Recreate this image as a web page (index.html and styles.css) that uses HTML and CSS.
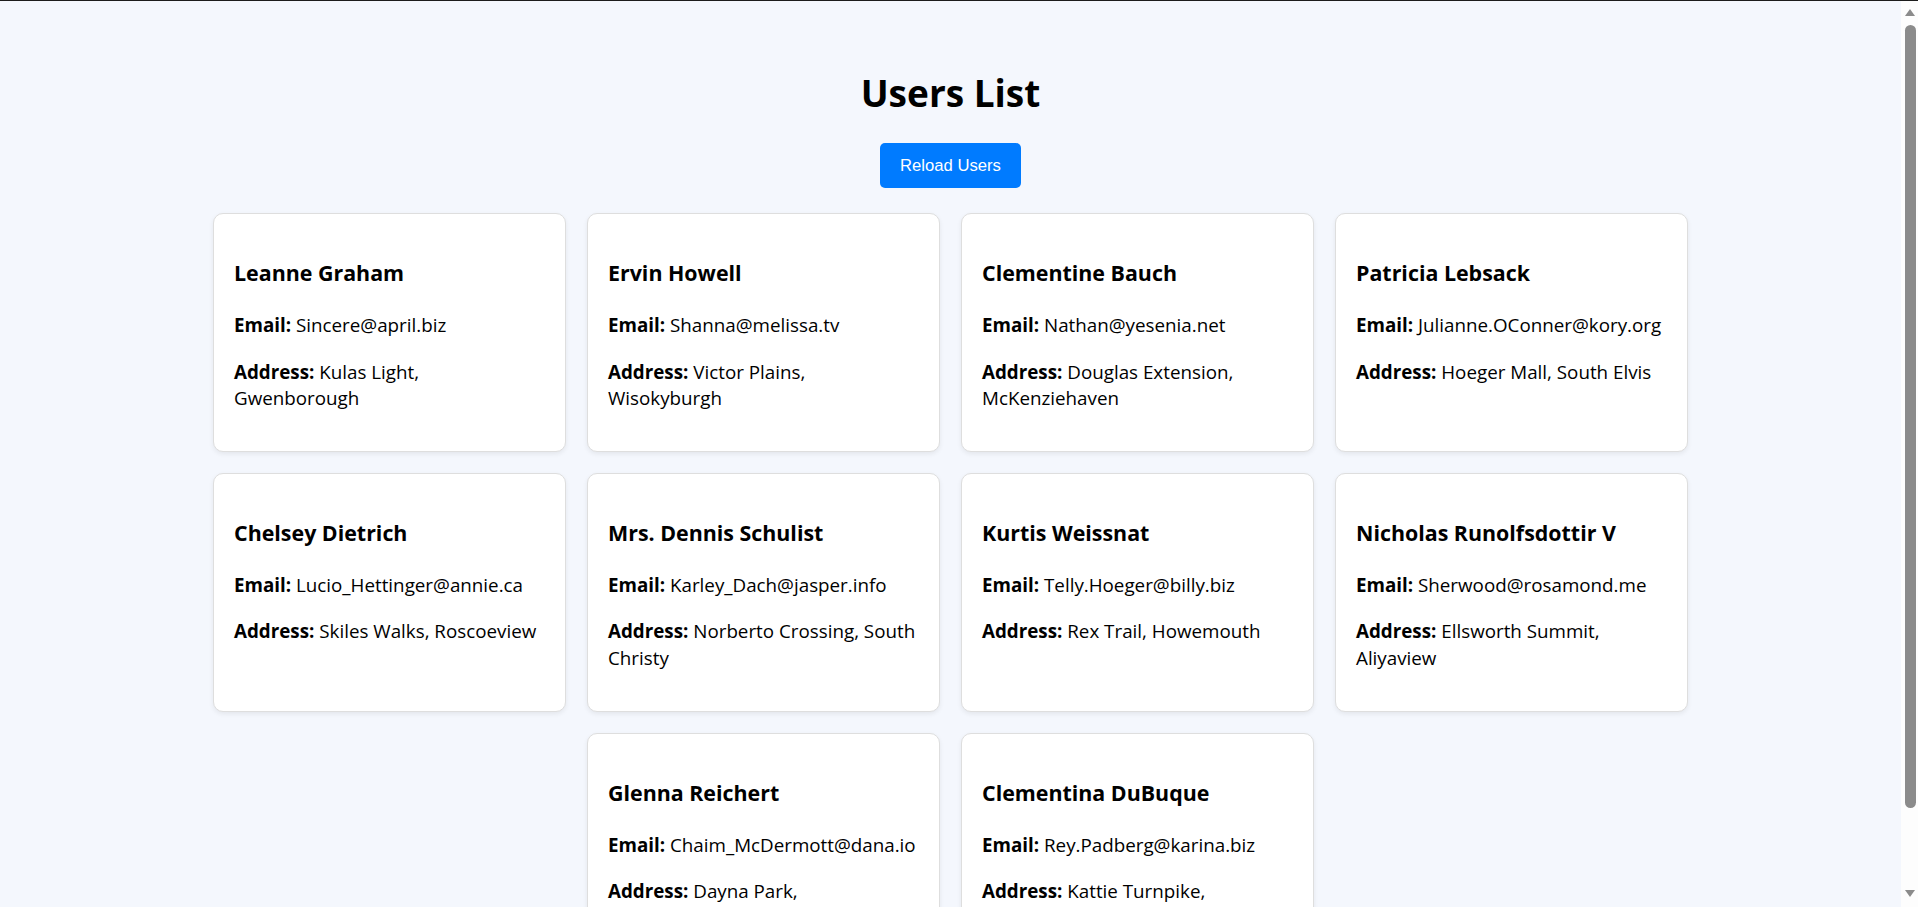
FILE: index.html
```html
<!DOCTYPE html>
<html lang="en">
<head>
<meta charset="utf-8">
<title>Users List</title>
<link rel="stylesheet" href="styles.css">
</head>
<body>
<main class="viewport">
  <div class="page">
    <h1 class="title">Users List</h1>
    <button class="reload-btn" type="button">Reload Users</button>
    <div class="user-list">
      <div class="user-card">
        <h3 class="user-name">Leanne Graham</h3>
        <p class="user-field"><strong>Email:</strong> Sincere@april.biz</p>
        <p class="user-field"><strong>Address:</strong> Kulas Light, Gwenborough</p>
      </div>
      <div class="user-card">
        <h3 class="user-name">Ervin Howell</h3>
        <p class="user-field"><strong>Email:</strong> Shanna@melissa.tv</p>
        <p class="user-field"><strong>Address:</strong> Victor Plains, Wisokyburgh</p>
      </div>
      <div class="user-card">
        <h3 class="user-name">Clementine Bauch</h3>
        <p class="user-field"><strong>Email:</strong> Nathan@yesenia.net</p>
        <p class="user-field"><strong>Address:</strong> Douglas Extension, McKenziehaven</p>
      </div>
      <div class="user-card">
        <h3 class="user-name">Patricia Lebsack</h3>
        <p class="user-field"><strong>Email:</strong> Julianne.OConner@kory.org</p>
        <p class="user-field"><strong>Address:</strong> Hoeger Mall, South Elvis</p>
      </div>
      <div class="user-card">
        <h3 class="user-name">Chelsey Dietrich</h3>
        <p class="user-field"><strong>Email:</strong> Lucio_Hettinger@annie.ca</p>
        <p class="user-field"><strong>Address:</strong> Skiles Walks, Roscoeview</p>
      </div>
      <div class="user-card">
        <h3 class="user-name">Mrs. Dennis Schulist</h3>
        <p class="user-field"><strong>Email:</strong> Karley_Dach@jasper.info</p>
        <p class="user-field"><strong>Address:</strong> Norberto Crossing, South Christy</p>
      </div>
      <div class="user-card">
        <h3 class="user-name">Kurtis Weissnat</h3>
        <p class="user-field"><strong>Email:</strong> Telly.Hoeger@billy.biz</p>
        <p class="user-field"><strong>Address:</strong> Rex Trail, Howemouth</p>
      </div>
      <div class="user-card">
        <h3 class="user-name">Nicholas Runolfsdottir V</h3>
        <p class="user-field"><strong>Email:</strong> Sherwood@rosamond.me</p>
        <p class="user-field"><strong>Address:</strong> Ellsworth Summit, Aliyaview</p>
      </div>
      <div class="user-card">
        <h3 class="user-name">Glenna Reichert</h3>
        <p class="user-field"><strong>Email:</strong> Chaim_McDermott@dana.io</p>
        <p class="user-field"><strong>Address:</strong> Dayna Park, Bartholomebury</p>
      </div>
      <div class="user-card">
        <h3 class="user-name">Clementina DuBuque</h3>
        <p class="user-field"><strong>Email:</strong> Rey.Padberg@karina.biz</p>
        <p class="user-field"><strong>Address:</strong> Kattie Turnpike, Lebsackbury</p>
      </div>
    </div>
  </div>
</main>
<div class="scrollbar" aria-hidden="true">
  <span class="scroll-arrow scroll-arrow-up"></span>
  <span class="scroll-thumb"></span>
  <span class="scroll-arrow scroll-arrow-down"></span>
</div>
</body>
</html>
```

FILE: styles.css
```css
html {
  background: #f4f7fd;
}

body {
  box-sizing: border-box;
  display: flex;
  height: 100vh;
  margin: 0;
  overflow: hidden;
  border-top: 1px solid #1c1c1c;
  background: #f4f7fd;
  color: #000;
  font-family: "Open Sans", "Noto Sans", sans-serif;
}

.viewport {
  flex: 1;
  min-width: 0;
  overflow: hidden;
}

.page {
  padding: 65px 0 40px;
  text-align: center;
}

.title {
  margin: 0 0 24px;
  font-size: 37px;
  line-height: 53px;
  font-weight: 700;
}

.reload-btn {
  display: inline-block;
  margin: 0 0 25px;
  padding: 13px 20px;
  border: 0;
  border-radius: 5px;
  background: #007bff;
  color: #fff;
  font-family: "Liberation Sans", Arial, sans-serif;
  font-size: 16.67px;
  line-height: 19px;
  cursor: pointer;
}

.user-list {
  display: flex;
  flex-wrap: wrap;
  justify-content: center;
  gap: 21px;
  max-width: 1475px;
  margin: 0 auto;
}

.user-card {
  box-sizing: border-box;
  width: 353px;
  padding: 20px 20px 19px;
  border: 1px solid #dedede;
  border-radius: 10px;
  background: #fff;
  box-shadow: 0 2px 5px rgba(0, 0, 0, 0.07);
  text-align: left;
}

.user-name {
  margin: 23px 0 24px;
  font-size: 21.4px;
  line-height: 31px;
  font-weight: 700;
}

.user-field {
  margin: 20px 0;
  font-size: 18.8px;
  line-height: 26.6px;
}

.user-field strong {
  font-weight: 700;
}

/* Drawn Windows-style scrollbar */
.scrollbar {
  display: flex;
  flex: none;
  flex-direction: column;
  align-items: flex-start;
  width: 17px;
  padding-left: 4px;
  box-sizing: border-box;
  background: #fdfdfd;
}

.scroll-arrow {
  display: block;
  width: 0;
  height: 0;
  border-left: 5.5px solid transparent;
  border-right: 5.5px solid transparent;
}

.scroll-arrow-up {
  margin-top: 8px;
  border-bottom: 7px solid #8b8b8b;
}

.scroll-thumb {
  display: block;
  width: 11px;
  height: 783px;
  margin-top: 9px;
  border-radius: 6px;
  background: #8b8b8b;
}

.scroll-arrow-down {
  margin-top: 82px;
  border-top: 7px solid #8b8b8b;
}
```
